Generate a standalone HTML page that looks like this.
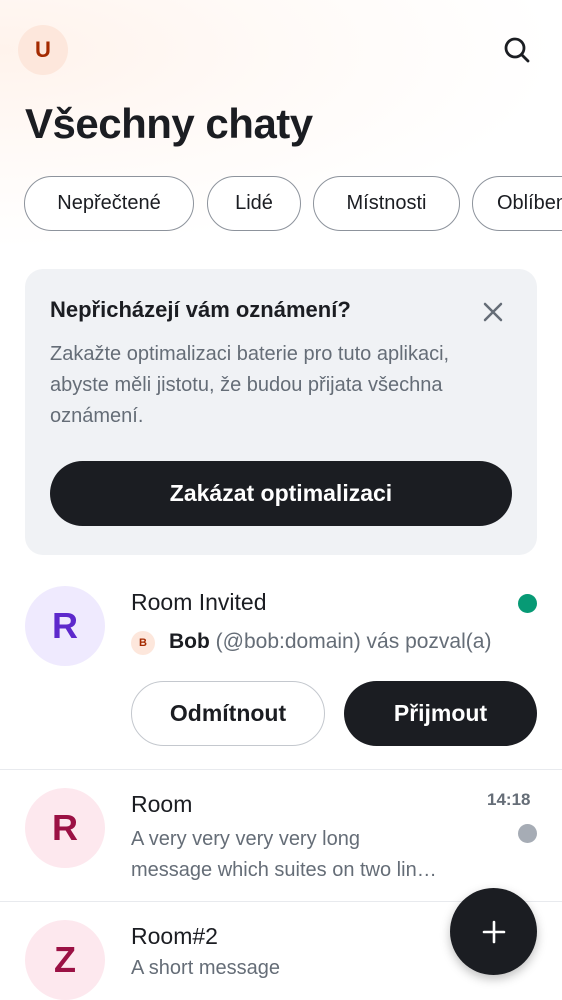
<!DOCTYPE html>
<html><head><meta charset="utf-8"><style>
*{box-sizing:border-box;margin:0;padding:0}
body{width:562px;height:1000px;overflow:hidden;font-family:"Liberation Sans",sans-serif;background:#fff;position:relative;color:#1b1d22}
.bg{position:absolute;left:0;top:0;width:562px;height:250px;background:radial-gradient(ellipse at 0% 20%,#fff3ec 0%,#fffaf7 35%,#fff 70%)}
.abs{position:absolute}
.av{border-radius:50%;display:flex;align-items:center;justify-content:center;font-weight:bold}
.chip{position:absolute;top:176px;height:55px;border:1.5px solid #8d939c;border-radius:28px;font-size:20px;display:flex;align-items:center;justify-content:center;background:#fff}
.btn{position:absolute;border-radius:33px;display:flex;align-items:center;justify-content:center;font-size:23px;font-weight:bold}
.sep{position:absolute;left:0;width:562px;height:1px;background:#e8eaee}
.t{position:absolute;font-size:23px}
.s{position:absolute;font-size:20px;color:#656d77}
</style></head><body>
<div class="bg"></div>
<div class="abs av" style="left:18px;top:25px;width:50px;height:50px;background:#fde7dc;color:#a42a00;font-size:22px">U</div>
<svg class="abs" style="left:502px;top:35px" width="30" height="30" viewBox="0 0 30 30"><circle cx="13" cy="13" r="9" fill="none" stroke="#1b1d22" stroke-width="2.8"/><line x1="19.5" y1="19.5" x2="26" y2="26" stroke="#1b1d22" stroke-width="2.8" stroke-linecap="round"/></svg>
<div class="abs" style="left:25px;top:100px;font-size:42px;font-weight:bold;letter-spacing:-0.5px">Všechny chaty</div>
<div class="chip" style="left:24px;width:170px">Nepřečtené</div>
<div class="chip" style="left:207px;width:94px">Lidé</div>
<div class="chip" style="left:313px;width:147px">Místnosti</div>
<div class="chip" style="left:472px;width:130px;justify-content:flex-start;padding-left:24px">Oblíbené</div>
<div class="abs" style="left:25px;top:269px;width:512px;height:286px;background:#f0f2f5;border-radius:18px"></div>
<div class="abs" style="left:50px;top:297px;font-size:22px;font-weight:bold">Nepřicházejí vám oznámení?</div>
<svg class="abs" style="left:482px;top:301px" width="22" height="22" viewBox="0 0 22 22"><path d="M3 3L19 19M19 3L3 19" stroke="#656d77" stroke-width="2.5" stroke-linecap="round"/></svg>
<div class="abs" style="left:50px;top:339px;font-size:20px;line-height:31px;color:#656d77;width:460px">Zakažte optimalizaci baterie pro tuto aplikaci,<br>abyste měli jistotu, že budou přijata všechna<br>oznámení.</div>
<div class="btn" style="left:50px;top:461px;width:462px;height:65px;background:#1b1d22;color:#fff">Zakázat optimalizaci</div>
<div class="abs av" style="left:25px;top:586px;width:80px;height:80px;background:#efeafe;color:#5d29cc;font-size:36px">R</div>
<div class="t" style="left:131px;top:589px">Room Invited</div>
<div class="abs" style="left:518px;top:594px;width:19px;height:19px;border-radius:50%;background:#079a75"></div>
<div class="abs av" style="left:131px;top:631px;width:24px;height:24px;background:#fde7dc;color:#a42a00;font-size:11px">B</div>
<div class="abs" style="left:169px;top:630px;font-size:21px;color:#656d77"><b style="color:#1b1d22">Bob</b> (@bob:domain) vás pozval(a)</div>
<div class="btn" style="left:131px;top:681px;width:194px;height:65px;border:1.5px solid #c4c8ce;background:#fff">Odmítnout</div>
<div class="btn" style="left:344px;top:681px;width:193px;height:65px;background:#1b1d22;color:#fff">Přijmout</div>
<div class="sep" style="top:769px"></div>
<div class="abs av" style="left:25px;top:788px;width:80px;height:80px;background:#fde8ee;color:#9b1144;font-size:36px">R</div>
<div class="t" style="left:131px;top:791px">Room</div>
<div class="abs" style="left:487px;top:790px;font-size:17px;font-weight:bold;color:#656d77">14:18</div>
<div class="s" style="left:131px;top:824px;line-height:31px;width:345px;white-space:nowrap;overflow:hidden">A very very very very long<br>message which suites on two lin…</div>
<div class="abs" style="left:518px;top:824px;width:19px;height:19px;border-radius:50%;background:#a6acb5"></div>
<div class="sep" style="top:901px"></div>
<div class="abs av" style="left:25px;top:920px;width:80px;height:80px;background:#fde8ee;color:#9b1144;font-size:36px">Z</div>
<div class="t" style="left:131px;top:923px">Room#2</div>
<div class="s" style="left:131px;top:957px">A short message</div>
<div class="abs av" style="left:450px;top:888px;width:87px;height:87px;background:#1b1d22;box-shadow:0 4px 10px rgba(0,0,0,.25)"><svg width="26" height="26" viewBox="0 0 26 26"><path d="M13 3V23M3 13H23" stroke="#fff" stroke-width="2.6" stroke-linecap="round"/></svg></div>
</body></html>
